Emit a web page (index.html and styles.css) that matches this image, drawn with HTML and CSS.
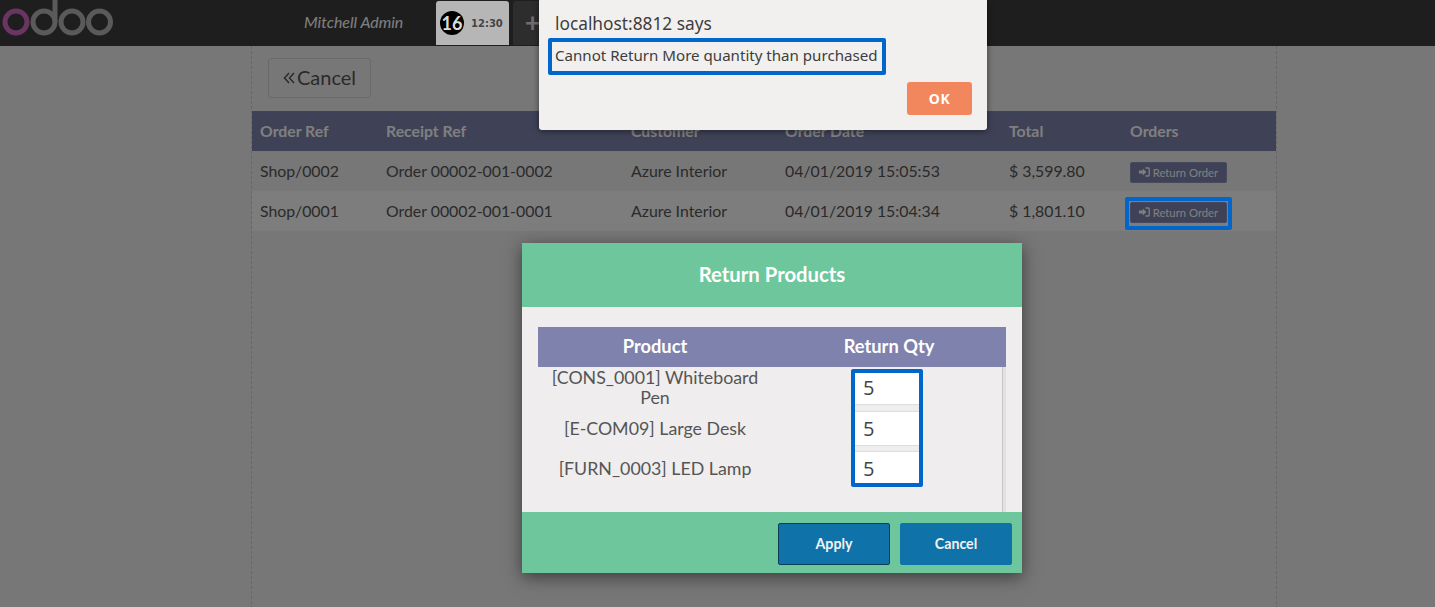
FILE: index.html
```html
<!DOCTYPE html>
<html>
<head>
  <meta charset="utf-8">
  <title>Return Products</title>
  <link rel="stylesheet" href="styles.css">
</head>
<body>
<div class="topbar">
  <svg class="logo" width="114" height="46" viewBox="0 0 114 46">
    <circle cx="16" cy="22" r="11" fill="none" stroke="#6a3563" stroke-width="5"></circle>
    <circle cx="44" cy="22" r="11" fill="none" stroke="#5a5a5a" stroke-width="5"></circle>
    <path d="M55 22V0" fill="none" stroke="#5a5a5a" stroke-width="5"></path>
    <circle cx="72" cy="22" r="11" fill="none" stroke="#5a5a5a" stroke-width="5"></circle>
    <circle cx="99.5" cy="22" r="11" fill="none" stroke="#5a5a5a" stroke-width="5"></circle>
  </svg>
  <span class="username">Mitchell Admin</span>
  <div class="order-tab">
    <span class="order-num">16</span>
    <span class="order-time">12:30</span>
  </div>
  <div class="new-tab">+</div>
</div>

<div class="screen">
  <button class="back-btn">
    <svg class="back-icon" width="12" height="14" viewBox="0 0 12 14">
      <path d="M6 2 1.5 7 6 12M11 2 6.5 7l4.500 5" fill="none" stroke="#555" stroke-width="1.5"></path>
    </svg>Cancel
  </button>
  <table class="orders">
    <tr>
      <th class="col-ref">Order Ref</th>
      <th class="col-receipt">Receipt Ref</th>
      <th class="col-customer">Customer</th>
      <th class="col-date">Order Date</th>
      <th class="col-total">Total</th>
      <th>Orders</th>
    </tr>
    <tr>
      <td>Shop/0002</td>
      <td>Order 00002-001-0002</td>
      <td>Azure Interior</td>
      <td>04/01/2019 15:05:53</td>
      <td>$ 3,599.80</td>
      <td><button class="return-btn"><svg width="11" height="10" viewBox="0 0 11 10"><path d="M0 3.600h3.800V1.500L7.400 5 3.800 8.500V6.400H0z" fill="#fff"></path><path d="M6.500 1h2.700a1 1 0 0 1 1 1v6a1 1 0 0 1-1 1H6.500" fill="none" stroke="#fff" stroke-width="1.300"></path></svg> Return Order</button></td>
    </tr>
    <tr class="row-alt">
      <td>Shop/0001</td>
      <td>Order 00002-001-0001</td>
      <td>Azure Interior</td>
      <td>04/01/2019 15:04:34</td>
      <td>$ 1,801.10</td>
      <td><button class="return-btn"><svg width="11" height="10" viewBox="0 0 11 10"><path d="M0 3.600h3.800V1.500L7.400 5 3.800 8.500V6.400H0z" fill="#fff"></path><path d="M6.500 1h2.700a1 1 0 0 1 1 1v6a1 1 0 0 1-1 1H6.500" fill="none" stroke="#fff" stroke-width="1.300"></path></svg> Return Order</button></td>
    </tr>
  </table>
</div>

<div class="overlay">
  <div class="modal">
    <div class="modal-title">Return Products</div>
    <div class="modal-body">
      <div class="return-head">
        <span>Product</span>
        <span>Return Qty</span>
      </div>
      <div class="return-track">
        <div class="return-rows">
          <div class="names">
            <div class="name">[CONS_0001] Whiteboard Pen</div>
            <div class="name">[E-COM09] Large Desk</div>
            <div class="name">[FURN_0003] LED Lamp</div>
          </div>
          <div class="qtys">
            <input class="qty" type="text" value="5">
            <input class="qty" type="text" value="5">
            <input class="qty" type="text" value="5">
          </div>
        </div>
      </div>
    </div>
    <div class="modal-foot">
      <button class="foot-btn foot-btn-active">Apply</button>
      <button class="foot-btn">Cancel</button>
    </div>
  </div>
</div>

<div class="order-mark"></div>

<div class="alert">
  <div class="alert-from">localhost:8812 says</div>
  <div class="alert-msg">Cannot Return More quantity than purchased</div>
  <div class="alert-actions"><button class="alert-ok">OK</button></div>
</div>
</body>
</html>
```

FILE: styles.css
```css
html, body {
  height: 100%;
}
body {
  margin: 0;
  overflow: hidden;
  background-color: #f0eeee;
  font-family: "Lato", "Liberation Sans", sans-serif;
  color: #555;
}

/* top bar */
.topbar {
  display: flex;
  height: 46px;
  box-sizing: border-box;
  background-color: #3c3c3c;
}
.logo {
  position: relative;
  z-index: 2;
  flex: none;
}
.username {
  margin-left: 190px;
  width: 132px;
  line-height: 44px;
  font-size: 15.9px;
  font-style: italic;
  color: #fff;
}
.order-tab {
  position: relative;
  z-index: 2;
  display: flex;
  align-items: center;
  width: 73px;
  height: 44px;
  margin-top: 1px;
  padding-left: 4px;
  box-sizing: border-box;
  border-radius: 3px 3px 0 0;
  background-color: #b6b6b6;
}
.order-num {
  width: 24px;
  height: 24px;
  border-radius: 50%;
  background-color: #000;
  color: #ddd;
  font-size: 18px;
  font-weight: bold;
  line-height: 24px;
  text-align: center;
}
.order-time {
  margin-left: 7px;
  font-family: "DejaVu Sans", sans-serif;
  font-size: 10px;
  font-weight: bold;
  color: #444;
}
.new-tab {
  width: 60px;
  height: 44px;
  margin: 1px 0 0 4px;
  padding-left: 12px;
  box-sizing: border-box;
  border-radius: 3px 3px 0 0;
  background-color: #5a5a5a;
  color: #ddd;
  font-size: 26px;
  font-weight: bold;
  line-height: 42px;
}

/* order list */
.screen {
  width: 1024px;
  height: 561px;
  margin-left: 251px;
  border-left: 1px dashed #cfcfcf;
  border-right: 1px dashed #cfcfcf;
  padding-top: 12px;
  box-sizing: content-box;
}
.back-btn {
  display: block;
  width: 103px;
  height: 40px;
  margin: 0 0 13px 16px;
  padding: 0 0 2px;
  border: 1px solid #d3d3d3;
  border-radius: 3px;
  background-color: #f0eeee;
  font-family: inherit;
  font-size: 20px;
  color: #555;
}
.back-icon {
  margin-right: 2px;
}
.orders {
  width: 1024px;
  border-collapse: collapse;
  table-layout: fixed;
  font-size: 15.85px;
}
.orders th {
  height: 40px;
  padding: 0 8px 2px;
  box-sizing: border-box;
  background-color: #7f82ac;
  color: #fff;
  font-size: 15.8px;
  text-align: left;
}
.orders td {
  height: 40px;
  padding: 0 8px 2px;
  box-sizing: border-box;
  color: #555;
}
.col-ref { width: 126px; }
.col-receipt { width: 245px; }
.col-customer { width: 154px; }
.col-date { width: 224px; }
.col-total { width: 121px; }
.row-alt {
  background-color: #fbfbfb;
}
.return-btn {
  display: block;
  width: 97px;
  height: 21px;
  margin-top: 4px;
  padding: 0;
  border: 1px solid #9093b8;
  border-radius: 2px;
  background-color: #7f82ac;
  color: #fff;
  font-family: inherit;
  font-size: 11.3px;
}

/* dimmed layer and popup */
.overlay {
  position: absolute;
  top: 0;
  left: 0;
  right: 0;
  bottom: 0;
  z-index: 1;
  padding: 243px 0 0 522px;
  background-color: rgba(0, 0, 0, .5);
}
.modal {
  width: 500px;
  box-shadow: 0 4px 16px rgba(0, 0, 0, .5);
  background-color: #efeded;
}
.modal-title {
  height: 64px;
  background-color: #6ec79c;
  color: #fff;
  font-size: 20.3px;
  font-weight: bold;
  line-height: 63px;
  text-align: center;
}
.modal-body {
  padding: 20px 16px 0;
}
.return-head {
  display: flex;
  height: 40px;
  background-color: #7f82ac;
  color: #fff;
  font-size: 18.3px;
  font-weight: bold;
  line-height: 39px;
  text-align: center;
}
.return-head span {
  width: 234px;
}
.return-track {
  height: 145px;
  border-right: 3px solid #e2e0e0;
}
.return-rows {
  display: flex;
  height: 145px;
  border-right: 1px solid #c8c8c8;
}
.names {
  width: 234px;
  padding: 0 12px;
  box-sizing: border-box;
  font-size: 17.8px;
  line-height: 20px;
  text-align: center;
}
.name {
  padding-bottom: 20px;
}
.name:first-child {
  padding-bottom: 11px;
}
.qtys {
  align-self: flex-start;
  display: flex;
  flex-direction: column;
  width: 64px;
  margin: 2px 0 0 79px;
  border: 4px solid #0066cc;
  border-radius: 2px;
  background-color: #eee;
}
.qty {
  display: block;
  width: 64px;
  height: 35px;
  margin: 6px 0 5px;
  padding: 0 0 0 8px;
  box-sizing: border-box;
  border: 0 solid #ddd;
  border-width: 1px 0;
  border-radius: 0;
  background-color: #fff;
  font-family: "Open Sans", sans-serif;
  font-size: 20px;
  color: #444;
  outline: none;
}
.qty:first-child {
  height: 32px;
  margin: 0;
  padding-bottom: 2px;
  border-top: 0;
}
.qty:last-child {
  height: 32px;
  margin: 0;
  padding-top: 2px;
  border-bottom: 0;
}
.modal-foot {
  display: flex;
  justify-content: flex-end;
  gap: 10px;
  height: 61px;
  padding: 11px 10px 0 0;
  box-sizing: border-box;
  background-color: #6ec79c;
}
.foot-btn {
  width: 112px;
  height: 42px;
  padding: 0 0 2px;
  border: 1px solid #0f72a9;
  border-radius: 2px;
  background-color: #0f72a9;
  color: #f2f2f2;
  font-family: inherit;
  font-size: 14.2px;
  font-weight: bold;
}
.foot-btn-active {
  border-color: #0c3c58;
}

/* annotation over the dimmed row */
.order-mark {
  position: absolute;
  top: 197px;
  left: 1125px;
  z-index: 2;
  width: 107px;
  height: 33px;
  box-sizing: border-box;
  border: 4px solid #0066cc;
  border-radius: 2px;
}

/* browser alert */
.alert {
  position: absolute;
  top: 0;
  left: 539px;
  z-index: 3;
  width: 448px;
  height: 130px;
  box-sizing: border-box;
  padding: 13px 15px 0 9px;
  border-radius: 0 0 3px 3px;
  background-color: #f2f0ee;
  box-shadow: 0 1px 6px rgba(0, 0, 0, .5);
  font-family: "Noto Sans", sans-serif;
  color: #3d3d3d;
}
.alert-from {
  padding-left: 7px;
  font-size: 17.3px;
  line-height: 21px;
}
.alert-msg {
  width: 338px;
  height: 37px;
  margin-top: 4px;
  padding-left: 3px;
  box-sizing: border-box;
  border: 4px solid #0066cc;
  border-radius: 2px;
  font-size: 15.1px;
  line-height: 27px;
}
.alert-actions {
  display: flex;
  justify-content: flex-end;
  margin-top: 7px;
}
.alert-ok {
  width: 65px;
  height: 33px;
  border: 0;
  border-radius: 3px;
  background-color: #f2865c;
  color: #fff;
  font-family: inherit;
  font-size: 14px;
  font-weight: bold;
  letter-spacing: .5px;
}
```
